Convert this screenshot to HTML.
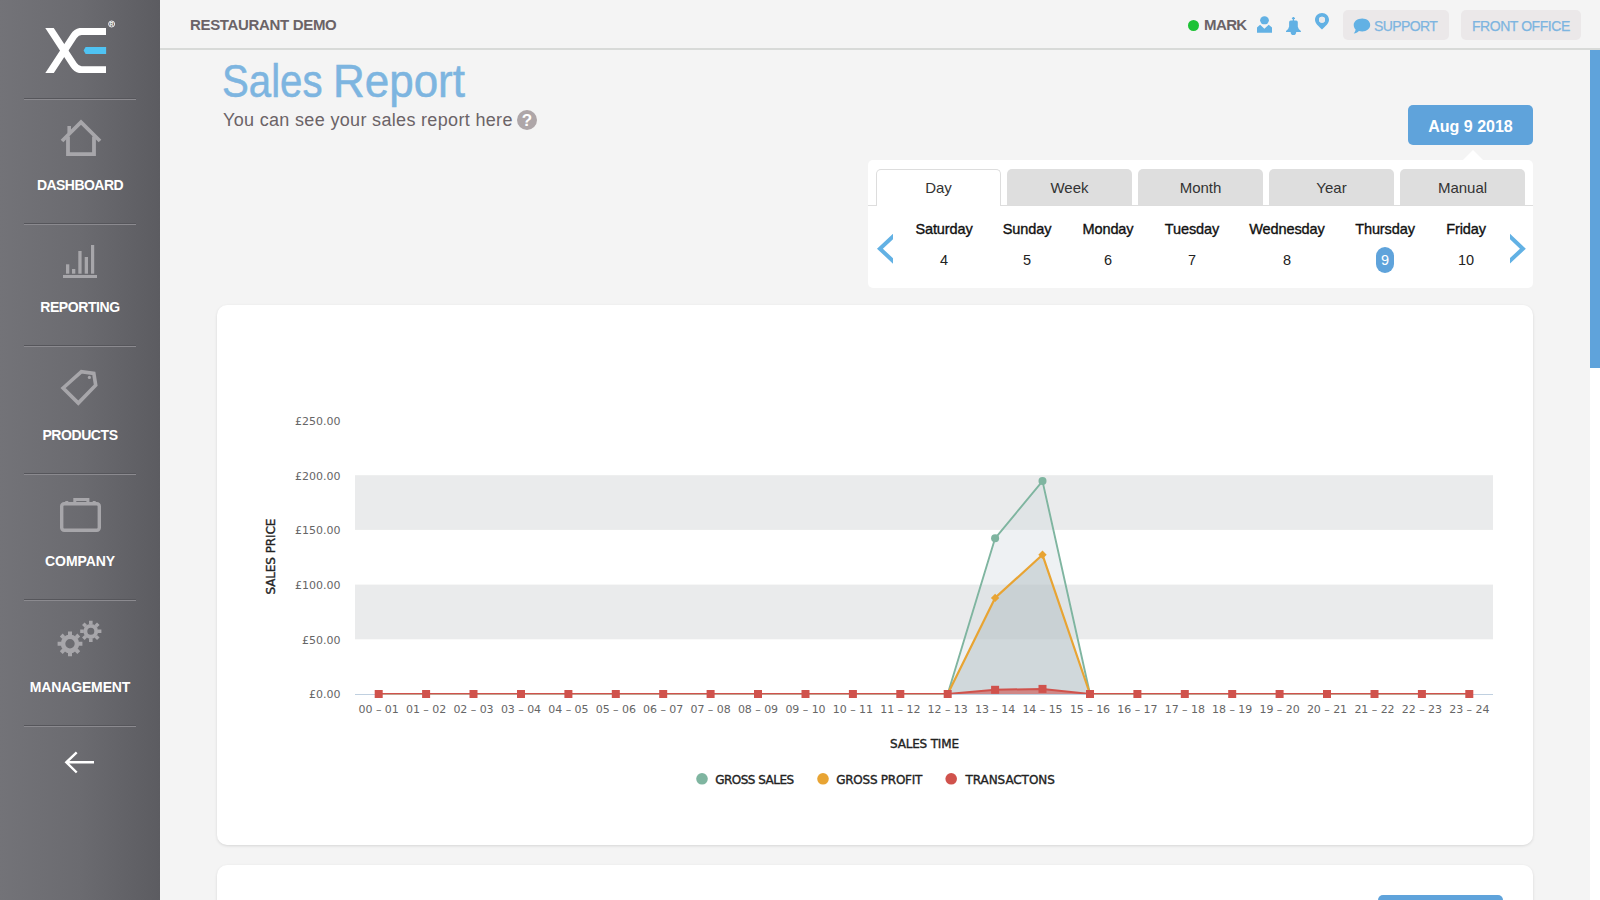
<!DOCTYPE html>
<html lang="en">
<head>
<meta charset="utf-8">
<title>Sales Report</title>
<style>
*{box-sizing:border-box;margin:0;padding:0}
html,body{width:1600px;height:900px;overflow:hidden;background:#f4f4f4;font-family:"Liberation Sans",sans-serif;}
body{position:relative}
.abs{position:absolute;white-space:nowrap;line-height:1}
/* sidebar */
#side{position:absolute;left:0;top:0;width:160px;height:900px;background:linear-gradient(90deg,#737378 0%,#6b6b70 50%,#5c5c61 100%)}
.sep{position:absolute;left:24px;width:112px;height:2px;border-top:1px solid #56565b;border-bottom:1px solid #8b8a8f}
.nav{position:absolute;left:0;width:160px;text-align:center;color:#fff;font-weight:bold;font-size:14px;line-height:1;white-space:nowrap}
#side svg{position:absolute;overflow:visible}
/* header */
#top{position:absolute;left:160px;top:0;width:1440px;height:50px;background:#f4f4f4;border-bottom:2px solid #d8dad8}
.hbtn{position:absolute;top:10px;height:30px;background:#ebe8e9;border-radius:5px}
.tt{font-size:45.6px;color:#7db5e0;-webkit-text-stroke:0.55px #7db5e0;transform-origin:0 0}
.blue{color:#7db5e0;-webkit-text-stroke:0.25px #7db5e0}
.dark{color:#6b6367}
/* date panel */
#dp{position:absolute;left:868px;top:160px;width:665px;height:128px;background:#fff;border-radius:5px}
.tab{position:absolute;top:9px;width:125px;height:36px;background:#dedede;border-radius:5px 5px 0 0;text-align:center;font-size:15px;color:#333;line-height:38px}
.tab.on{background:#fff;border:1px solid #ddd;border-bottom:none;height:37px;line-height:35px}
.dn,.dd{position:absolute;transform:translateX(-50%);white-space:nowrap;line-height:1;font-size:14.5px;color:#111}
.dn{top:61.5px;-webkit-text-stroke:0.35px #111;letter-spacing:-0.1px}
.dd{top:93px;color:#222}
.card{position:absolute;left:217px;width:1316px;background:#fff;border-radius:10px;box-shadow:0 1px 3px rgba(0,0,0,.12)}
svg text{font-family:"DejaVu Sans","Liberation Sans",sans-serif}
svg text.fb{stroke:#222;stroke-width:0.35px}
</style>
</head>
<body>

<!-- ============ SIDEBAR ============ -->
<div id="side">
  <!-- logo -->
  <svg id="logo" style="left:0;top:0" width="160" height="98" viewBox="0 0 160 98">
    <defs><clipPath id="lc"><rect x="40" y="28" width="66.1" height="45.1"/></clipPath></defs>
    <g clip-path="url(#lc)" fill="none" stroke="#fff" stroke-width="7.1">
      <path d="M46.3 23.1 L73.7 65 Q76.8 69.7 81.6 69.7 L108 69.7"/>
      <path d="M46.3 78 L73.7 36.1 Q76.8 31.4 81.6 31.4 L108 31.4"/>
    </g>
    <path d="M83.6 50.5 L85.6 47 L106.1 47 L106.1 54 L85.6 54 Z" fill="#4fc3f3"/>
    <circle cx="111.6" cy="24" r="3" fill="none" stroke="#fff" stroke-width="0.9"/>
    <text x="111.6" y="25.9" font-size="5" font-weight="bold" fill="#fff" text-anchor="middle" style="font-family:'Liberation Sans',sans-serif">R</text>
  </svg>
  <div class="sep" style="top:98px"></div>

  <!-- dashboard -->
  <svg style="left:60px;top:118px" width="42" height="40" viewBox="60 118 42 40">
    <g fill="none" stroke="#a7a6aa" stroke-width="3.8">
      <path d="M62 141 L81 122.2 L100 141" stroke-linejoin="miter"/>
      <path d="M68 136.5 L68 154.1 L94 154.1 L94 136.5"/>
      <path d="M69.2 133 L69.2 126" stroke-width="3.6"/>
    </g>
  </svg>
  <div class="nav" id="n1" style="top:178px;letter-spacing:-0.54px">DASHBOARD</div>
  <div class="sep" style="top:223px"></div>

  <!-- reporting -->
  <svg style="left:60px;top:243px" width="42" height="38" viewBox="60 243 42 38">
    <g fill="#a7a6aa">
      <rect x="63" y="275" width="34" height="3"/>
      <rect x="66" y="264.3" width="3.3" height="9.4"/>
      <rect x="72" y="269" width="3.3" height="4.7"/>
      <rect x="78.3" y="251" width="3.3" height="22.7"/>
      <rect x="84.7" y="257" width="3.3" height="16.7"/>
      <rect x="91" y="245" width="3.2" height="28.7"/>
    </g>
  </svg>
  <div class="nav" id="n2" style="top:300px;letter-spacing:-0.42px">REPORTING</div>
  <div class="sep" style="top:345px"></div>

  <!-- products -->
  <svg style="left:58px;top:366px" width="44" height="44" viewBox="58 366 44 44">
    <path d="M63.1 388 L81.4 371.6 L93.8 373.4 L95.7 385.2 L78.3 403.1 Z" fill="none" stroke="#a7a6aa" stroke-width="3.6" stroke-linejoin="miter"/>
    <circle cx="89.4" cy="377.4" r="1.6" fill="#a7a6aa"/>
  </svg>
  <div class="nav" id="n3" style="top:428px;letter-spacing:-0.43px">PRODUCTS</div>
  <div class="sep" style="top:473px"></div>

  <!-- company -->
  <svg style="left:58px;top:496px" width="46" height="40" viewBox="58 496 46 40">
    <g fill="none" stroke="#a7a6aa">
      <rect x="61.7" y="503.7" width="37.6" height="26.6" rx="2.5" stroke-width="3.4"/>
      <path d="M74.8 503 L74.8 499.4 L87.9 499.4 L87.9 503" stroke-width="3"/>
      <path d="M65.3 502 h3 M92.7 502 h3" stroke-width="2"/>
    </g>
  </svg>
  <div class="nav" id="n4" style="top:554px;letter-spacing:-0.1px">COMPANY</div>
  <div class="sep" style="top:599px"></div>

  <!-- management -->
  <svg style="left:54px;top:618px" width="52" height="42" viewBox="54 618 52 42">
    <g fill="none" stroke="#a7a6aa">
      <circle cx="70" cy="643.8" r="7" stroke-width="4.6"/>
      <path d="M70.00 635.00 L70.00 631.40 M76.22 637.58 L78.77 635.03 M78.80 643.80 L82.40 643.80 M76.22 650.02 L78.77 652.57 M70.00 652.60 L70.00 656.20 M63.78 650.02 L61.23 652.57 M61.20 643.80 L57.60 643.80 M63.78 637.58 L61.23 635.03" stroke-width="4"/>
      <circle cx="90.8" cy="631.3" r="5.45" stroke-width="3.9"/>
      <path d="M90.80 624.30 L90.80 620.70 M95.75 626.35 L98.30 623.80 M97.80 631.30 L101.40 631.30 M95.75 636.25 L98.30 638.80 M90.80 638.30 L90.80 641.90 M85.85 636.25 L83.30 638.80 M83.80 631.30 L80.20 631.30 M85.85 626.35 L83.30 623.80" stroke-width="3.6"/>
    </g>
  </svg>
  <div class="nav" id="n5" style="top:680px;letter-spacing:-0.15px">MANAGEMENT</div>
  <div class="sep" style="top:725px"></div>

  <!-- back arrow -->
  <svg style="left:60px;top:748px" width="40" height="30" viewBox="60 748 40 30">
    <path d="M94 762.3 L66.5 762.3 M76.7 752.3 L66.3 762.3 L76.7 772.5" fill="none" stroke="#fff" stroke-width="2.4"/>
  </svg>
</div>

<!-- ============ HEADER ============ -->
<div id="top">
  <div class="abs dark" id="h1" style="left:30px;top:17px;font-size:15px;font-weight:bold;letter-spacing:-0.33px">RESTAURANT DEMO</div>
  <div class="abs" style="left:1028px;top:20px;width:11px;height:11px;border-radius:50%;background:#1dc235"></div>
  <div class="abs dark" id="h2" style="left:1044px;top:17px;font-size:15px;font-weight:bold;letter-spacing:-0.6px">MARK</div>
  <!-- user / bell / pin -->
  <svg class="abs" style="left:1095px;top:10px" width="80" height="30" viewBox="1255 10 80 30">
    <g fill="#62b1e4">
      <ellipse cx="1264.5" cy="20.3" rx="4.4" ry="4.05"/>
      <path d="M1257 32.8 L1257 27.4 L1260.1 24.8 L1264.4 28.7 L1268.7 24.8 L1272 27.4 L1272 32.8 Z"/>
      <!-- bell -->
      <path d="M1292.7 17 L1294.1 17 L1294.1 17.8 L1295 17.8 L1295 19 L1294.1 19 L1294.1 20.6 L1296.2 20.6 Q1297.8 20.6 1297.8 22.2 L1297.8 26.4 Q1298.2 29.2 1300.9 31 L1300.9 31.9 L1286 31.9 L1286 31 Q1288.7 29.2 1289.1 26.4 L1289.1 22.2 Q1289.1 20.6 1290.7 20.6 L1292.7 20.6 L1292.7 19 L1291.9 19 L1291.9 17.8 L1292.7 17.8 Z"/>
      <path d="M1290.6 31.9 A2.8 3.1 0 0 0 1296.2 31.9 Z"/>
      <!-- pin -->
      <path d="M1322 13 C1326 13 1329 16 1329 19.8 C1329 23.2 1325.6 26.2 1322 29.6 C1318.4 26.2 1315 23.2 1315 19.8 C1315 16 1318 13 1322 13 Z M1322 16.7 A3 3 0 1 0 1322 22.7 A3 3 0 1 0 1322 16.7 Z" fill-rule="evenodd"/>
      <circle cx="1322" cy="19.7" r="3" fill="#e9e9eb"/>
    </g>
  </svg>
  <div class="hbtn" style="left:1183px;width:106px"></div>
  <svg class="abs" style="left:1192px;top:17px" width="20" height="18" viewBox="1352 17 20 18">
    <path d="M1362.2 18.6 C1366.8 18.6 1370.2 21.4 1370.2 25 C1370.2 28.6 1366.8 31.4 1362.2 31.4 C1361 31.4 1359.9 31.2 1358.9 30.9 C1357.6 32.2 1355.8 33.3 1353.8 33.6 C1354.8 32.4 1355.5 31 1355.6 29.6 C1354.6 28.5 1353.7 26.9 1353.7 25 C1353.7 21.4 1357.6 18.6 1362.2 18.6 Z" fill="#62b1e4"/>
  </svg>
  <div class="abs blue" id="h3" style="left:1214px;top:19px;font-size:14px;letter-spacing:-0.6px">SUPPORT</div>
  <div class="hbtn" style="left:1301px;width:120px"></div>
  <div class="abs blue" id="h4" style="left:1312px;top:19px;font-size:14px;letter-spacing:-0.45px">FRONT OFFICE</div>
</div>

<!-- scrollbar -->
<div class="abs" style="left:1590px;top:50px;width:10px;height:850px;background:#fff"></div>
<div class="abs" style="left:1590px;top:50px;width:10px;height:318px;background:#5fa3db"></div>

<!-- ============ TITLES ============ -->
<div class="abs tt" id="t1" style="left:222px;top:58.5px;transform:scaleX(0.881)">Sales</div>
<div class="abs tt" id="t1b" style="left:332.7px;top:58.5px;transform:scaleX(0.964)">Report</div>
<div class="abs dark" id="t2" style="left:223px;top:111px;font-size:18px;letter-spacing:0.33px">You can see your sales report here</div>
<div class="abs" id="q" style="left:517px;top:110px;width:20px;height:20px;border-radius:50%;background:#aea6a8;color:#fff;font-weight:bold;font-size:17px;line-height:21px;text-align:center">?</div>

<!-- date button -->
<div class="abs" id="db" style="left:1408px;top:105px;width:125px;height:40px;border-radius:5px;background:#5fa3db;color:#fff;font-weight:bold;font-size:16px;line-height:43px;text-align:center">Aug 9 2018</div>
<svg class="abs" style="left:1463px;top:150px" width="20" height="10" viewBox="0 0 20 10"><path d="M0 10 L10 0 L20 10 Z" fill="#fff"/></svg>

<!-- ============ DATE PANEL ============ -->
<div id="dp">
  <div class="abs" style="left:0;top:45px;width:665px;height:1px;background:#ddd"></div>
  <div class="tab on" style="left:8px">Day</div>
  <div class="tab" style="left:139px">Week</div>
  <div class="tab" style="left:270px">Month</div>
  <div class="tab" style="left:401px">Year</div>
  <div class="tab" style="left:532px">Manual</div>
  <svg class="abs" style="left:8px;top:72px" width="20" height="34" viewBox="0 0 20 34"><defs><clipPath id="cl"><rect x="0" y="0" width="17" height="34"/></clipPath></defs><path d="M24.6 -2.7 L3.9 16.7 L24.6 36.1" fill="none" stroke="#62b1e4" stroke-width="4" clip-path="url(#cl)"/></svg>
  <svg class="abs" style="left:639px;top:72px" width="20" height="34" viewBox="0 0 20 34"><defs><clipPath id="cr"><rect x="3" y="0" width="17" height="34"/></clipPath></defs><path d="M-4.8 -2.7 L15.9 16.7 L-4.8 36.1" fill="none" stroke="#62b1e4" stroke-width="4" clip-path="url(#cr)"/></svg>
  <div class="dn" id="d1" style="left:76px">Saturday</div><div class="dd" style="left:76px">4</div>
  <div class="dn" id="d2" style="left:159px">Sunday</div><div class="dd" style="left:159px">5</div>
  <div class="dn" id="d3" style="left:240px">Monday</div><div class="dd" style="left:240px">6</div>
  <div class="dn" id="d4" style="left:324px">Tuesday</div><div class="dd" style="left:324px">7</div>
  <div class="dn" id="d5" style="left:419px">Wednesday</div><div class="dd" style="left:419px">8</div>
  <div class="dn" id="d6" style="left:517px">Thursday</div>
  <div class="abs" style="left:508px;top:87px;width:18px;height:26px;border-radius:9px;background:#5fa3db"></div>
  <div class="dd" style="left:517px;color:#fff">9</div>
  <div class="dn" id="d7" style="left:598px">Friday</div><div class="dd" style="left:598px">10</div>
</div>

<!-- ============ CHART CARD ============ -->
<div class="card" id="c1" style="top:305px;height:540px">
<!--CHART-START-->
<svg class="abs" style="left:0;top:0" width="1316" height="540" viewBox="217 305 1316 540">
<defs><clipPath id="pc"><rect x="355" y="400" width="1138" height="294.3"/></clipPath></defs>
<rect x="355" y="475.2" width="1138" height="54.7" fill="#eaebec"/>
<rect x="355" y="584.6" width="1138" height="54.7" fill="#eaebec"/>
<path d="M355 694.5 L1493 694.5" stroke="#c0d0e0" stroke-width="1"/>
<path d="M378.7 694.0 L426.1 694.0 L473.5 694.0 L521.0 694.0 L568.4 694.0 L615.8 694.0 L663.2 694.0 L710.6 694.0 L758.0 694.0 L805.5 694.0 L852.9 694.0 L900.3 694.0 L947.7 694.0 L995.1 538.3 L1042.5 481.1 L1090.0 694.0 L1137.4 694.0 L1184.8 694.0 L1232.2 694.0 L1279.6 694.0 L1327.0 694.0 L1374.5 694.0 L1421.9 694.0 L1469.3 694.0 L1469.3 694.0 L378.7 694.0 Z" fill="rgba(205,215,221,0.34)"/>
<path clip-path="url(#pc)" d="M378.7 694.0 L426.1 694.0 L473.5 694.0 L521.0 694.0 L568.4 694.0 L615.8 694.0 L663.2 694.0 L710.6 694.0 L758.0 694.0 L805.5 694.0 L852.9 694.0 L900.3 694.0 L947.7 694.0 L995.1 538.3 L1042.5 481.1 L1090.0 694.0 L1137.4 694.0 L1184.8 694.0 L1232.2 694.0 L1279.6 694.0 L1327.0 694.0 L1374.5 694.0 L1421.9 694.0 L1469.3 694.0" fill="none" stroke="#7fb5a0" stroke-width="1.9" stroke-linejoin="round" stroke-linecap="round"/>
<circle cx="995.1" cy="538.3" r="4" fill="#7fb5a0"/>
<circle cx="1042.5" cy="481.1" r="4" fill="#7fb5a0"/>
<path d="M378.7 694.0 L426.1 694.0 L473.5 694.0 L521.0 694.0 L568.4 694.0 L615.8 694.0 L663.2 694.0 L710.6 694.0 L758.0 694.0 L805.5 694.0 L852.9 694.0 L900.3 694.0 L947.7 694.0 L995.1 597.9 L1042.5 554.8 L1090.0 694.0 L1137.4 694.0 L1184.8 694.0 L1232.2 694.0 L1279.6 694.0 L1327.0 694.0 L1374.5 694.0 L1421.9 694.0 L1469.3 694.0 L1469.3 694.0 L378.7 694.0 Z" fill="rgba(170,184,188,0.44)"/>
<path clip-path="url(#pc)" d="M378.7 694.0 L426.1 694.0 L473.5 694.0 L521.0 694.0 L568.4 694.0 L615.8 694.0 L663.2 694.0 L710.6 694.0 L758.0 694.0 L805.5 694.0 L852.9 694.0 L900.3 694.0 L947.7 694.0 L995.1 597.9 L1042.5 554.8 L1090.0 694.0 L1137.4 694.0 L1184.8 694.0 L1232.2 694.0 L1279.6 694.0 L1327.0 694.0 L1374.5 694.0 L1421.9 694.0 L1469.3 694.0" fill="none" stroke="#e8a433" stroke-width="2.2" stroke-linejoin="round" stroke-linecap="round"/>
<path d="M995.1 593.7 L999.3 597.9 L995.1 602.1 L990.9 597.9 Z" fill="#e8a433"/>
<path d="M1042.5 550.6 L1046.7 554.8 L1042.5 559.0 L1038.3 554.8 Z" fill="#e8a433"/>
<path d="M378.7 694.0 L426.1 694.0 L473.5 694.0 L521.0 694.0 L568.4 694.0 L615.8 694.0 L663.2 694.0 L710.6 694.0 L758.0 694.0 L805.5 694.0 L852.9 694.0 L900.3 694.0 L947.7 694.0 L995.1 689.8 L1042.5 688.9 L1090.0 694.0 L1137.4 694.0 L1184.8 694.0 L1232.2 694.0 L1279.6 694.0 L1327.0 694.0 L1374.5 694.0 L1421.9 694.0 L1469.3 694.0 L1469.3 694.0 L378.7 694.0 Z" fill="rgba(208,82,76,0.6)"/>
<path clip-path="url(#pc)" d="M378.7 694.0 L426.1 694.0 L473.5 694.0 L521.0 694.0 L568.4 694.0 L615.8 694.0 L663.2 694.0 L710.6 694.0 L758.0 694.0 L805.5 694.0 L852.9 694.0 L900.3 694.0 L947.7 694.0 L995.1 689.8 L1042.5 688.9 L1090.0 694.0 L1137.4 694.0 L1184.8 694.0 L1232.2 694.0 L1279.6 694.0 L1327.0 694.0 L1374.5 694.0 L1421.9 694.0 L1469.3 694.0" fill="none" stroke="#d0524c" stroke-width="2" stroke-linejoin="round" stroke-linecap="round"/>
<rect x="374.7" y="690.0" width="8" height="8" fill="#d0524c"/>
<rect x="422.1" y="690.0" width="8" height="8" fill="#d0524c"/>
<rect x="469.5" y="690.0" width="8" height="8" fill="#d0524c"/>
<rect x="517.0" y="690.0" width="8" height="8" fill="#d0524c"/>
<rect x="564.4" y="690.0" width="8" height="8" fill="#d0524c"/>
<rect x="611.8" y="690.0" width="8" height="8" fill="#d0524c"/>
<rect x="659.2" y="690.0" width="8" height="8" fill="#d0524c"/>
<rect x="706.6" y="690.0" width="8" height="8" fill="#d0524c"/>
<rect x="754.0" y="690.0" width="8" height="8" fill="#d0524c"/>
<rect x="801.5" y="690.0" width="8" height="8" fill="#d0524c"/>
<rect x="848.9" y="690.0" width="8" height="8" fill="#d0524c"/>
<rect x="896.3" y="690.0" width="8" height="8" fill="#d0524c"/>
<rect x="943.7" y="690.0" width="8" height="8" fill="#d0524c"/>
<rect x="991.1" y="685.8" width="8" height="8" fill="#d0524c"/>
<rect x="1038.5" y="684.9" width="8" height="8" fill="#d0524c"/>
<rect x="1086.0" y="690.0" width="8" height="8" fill="#d0524c"/>
<rect x="1133.4" y="690.0" width="8" height="8" fill="#d0524c"/>
<rect x="1180.8" y="690.0" width="8" height="8" fill="#d0524c"/>
<rect x="1228.2" y="690.0" width="8" height="8" fill="#d0524c"/>
<rect x="1275.6" y="690.0" width="8" height="8" fill="#d0524c"/>
<rect x="1323.0" y="690.0" width="8" height="8" fill="#d0524c"/>
<rect x="1370.5" y="690.0" width="8" height="8" fill="#d0524c"/>
<rect x="1417.9" y="690.0" width="8" height="8" fill="#d0524c"/>
<rect x="1465.3" y="690.0" width="8" height="8" fill="#d0524c"/>
<text x="340.5" y="698.3" font-size="11" fill="#666" text-anchor="end">£0.00</text>
<text x="340.5" y="643.6" font-size="11" fill="#666" text-anchor="end">£50.00</text>
<text x="340.5" y="588.9" font-size="11" fill="#666" text-anchor="end">£100.00</text>
<text x="340.5" y="534.2" font-size="11" fill="#666" text-anchor="end">£150.00</text>
<text x="340.5" y="479.5" font-size="11" fill="#666" text-anchor="end">£200.00</text>
<text x="340.5" y="424.8" font-size="11" fill="#666" text-anchor="end">£250.00</text>
<text x="378.7" y="712.8" font-size="11" fill="#666" text-anchor="middle" textLength="40.2" lengthAdjust="spacing">00 – 01</text>
<text x="426.1" y="712.8" font-size="11" fill="#666" text-anchor="middle" textLength="40.2" lengthAdjust="spacing">01 – 02</text>
<text x="473.5" y="712.8" font-size="11" fill="#666" text-anchor="middle" textLength="40.2" lengthAdjust="spacing">02 – 03</text>
<text x="521.0" y="712.8" font-size="11" fill="#666" text-anchor="middle" textLength="40.2" lengthAdjust="spacing">03 – 04</text>
<text x="568.4" y="712.8" font-size="11" fill="#666" text-anchor="middle" textLength="40.2" lengthAdjust="spacing">04 – 05</text>
<text x="615.8" y="712.8" font-size="11" fill="#666" text-anchor="middle" textLength="40.2" lengthAdjust="spacing">05 – 06</text>
<text x="663.2" y="712.8" font-size="11" fill="#666" text-anchor="middle" textLength="40.2" lengthAdjust="spacing">06 – 07</text>
<text x="710.6" y="712.8" font-size="11" fill="#666" text-anchor="middle" textLength="40.2" lengthAdjust="spacing">07 – 08</text>
<text x="758.0" y="712.8" font-size="11" fill="#666" text-anchor="middle" textLength="40.2" lengthAdjust="spacing">08 – 09</text>
<text x="805.5" y="712.8" font-size="11" fill="#666" text-anchor="middle" textLength="40.2" lengthAdjust="spacing">09 – 10</text>
<text x="852.9" y="712.8" font-size="11" fill="#666" text-anchor="middle" textLength="40.2" lengthAdjust="spacing">10 – 11</text>
<text x="900.3" y="712.8" font-size="11" fill="#666" text-anchor="middle" textLength="40.2" lengthAdjust="spacing">11 – 12</text>
<text x="947.7" y="712.8" font-size="11" fill="#666" text-anchor="middle" textLength="40.2" lengthAdjust="spacing">12 – 13</text>
<text x="995.1" y="712.8" font-size="11" fill="#666" text-anchor="middle" textLength="40.2" lengthAdjust="spacing">13 – 14</text>
<text x="1042.5" y="712.8" font-size="11" fill="#666" text-anchor="middle" textLength="40.2" lengthAdjust="spacing">14 – 15</text>
<text x="1090.0" y="712.8" font-size="11" fill="#666" text-anchor="middle" textLength="40.2" lengthAdjust="spacing">15 – 16</text>
<text x="1137.4" y="712.8" font-size="11" fill="#666" text-anchor="middle" textLength="40.2" lengthAdjust="spacing">16 – 17</text>
<text x="1184.8" y="712.8" font-size="11" fill="#666" text-anchor="middle" textLength="40.2" lengthAdjust="spacing">17 – 18</text>
<text x="1232.2" y="712.8" font-size="11" fill="#666" text-anchor="middle" textLength="40.2" lengthAdjust="spacing">18 – 19</text>
<text x="1279.6" y="712.8" font-size="11" fill="#666" text-anchor="middle" textLength="40.2" lengthAdjust="spacing">19 – 20</text>
<text x="1327.0" y="712.8" font-size="11" fill="#666" text-anchor="middle" textLength="40.2" lengthAdjust="spacing">20 – 21</text>
<text x="1374.5" y="712.8" font-size="11" fill="#666" text-anchor="middle" textLength="40.2" lengthAdjust="spacing">21 – 22</text>
<text x="1421.9" y="712.8" font-size="11" fill="#666" text-anchor="middle" textLength="40.2" lengthAdjust="spacing">22 – 23</text>
<text x="1469.3" y="712.8" font-size="11" fill="#666" text-anchor="middle" textLength="40.2" lengthAdjust="spacing">23 – 24</text>
<text class="fb" x="890" y="748" font-size="12" fill="#222" textLength="69" lengthAdjust="spacing">SALES TIME</text>
<text class="fb" transform="translate(275.2 594.6) rotate(-90)" font-size="12" fill="#222" textLength="76" lengthAdjust="spacing">SALES PRICE</text>
<circle cx="702.0" cy="778.8" r="5.8" fill="#7fb5a0"/>
<text class="fb" x="715.2" y="783.6" font-size="12" fill="#222" textLength="79" lengthAdjust="spacing">GROSS SALES</text>
<circle cx="823.0" cy="778.8" r="5.8" fill="#e8a433"/>
<text class="fb" x="836.2" y="783.6" font-size="12" fill="#222" textLength="86.2" lengthAdjust="spacing">GROSS PROFIT</text>
<circle cx="951.2" cy="778.8" r="5.8" fill="#d0524c"/>
<text class="fb" x="965.5" y="783.6" font-size="12" fill="#222" textLength="89.3" lengthAdjust="spacing">TRANSACTONS</text>
</svg>
<!--CHART-END-->
</div>

<!-- second card -->
<div class="card" style="top:865px;height:200px">
  <div class="abs" style="left:1161px;top:30px;width:125px;height:40px;border-radius:5px;background:#5fa3db"></div>
</div>

</body>
</html>
